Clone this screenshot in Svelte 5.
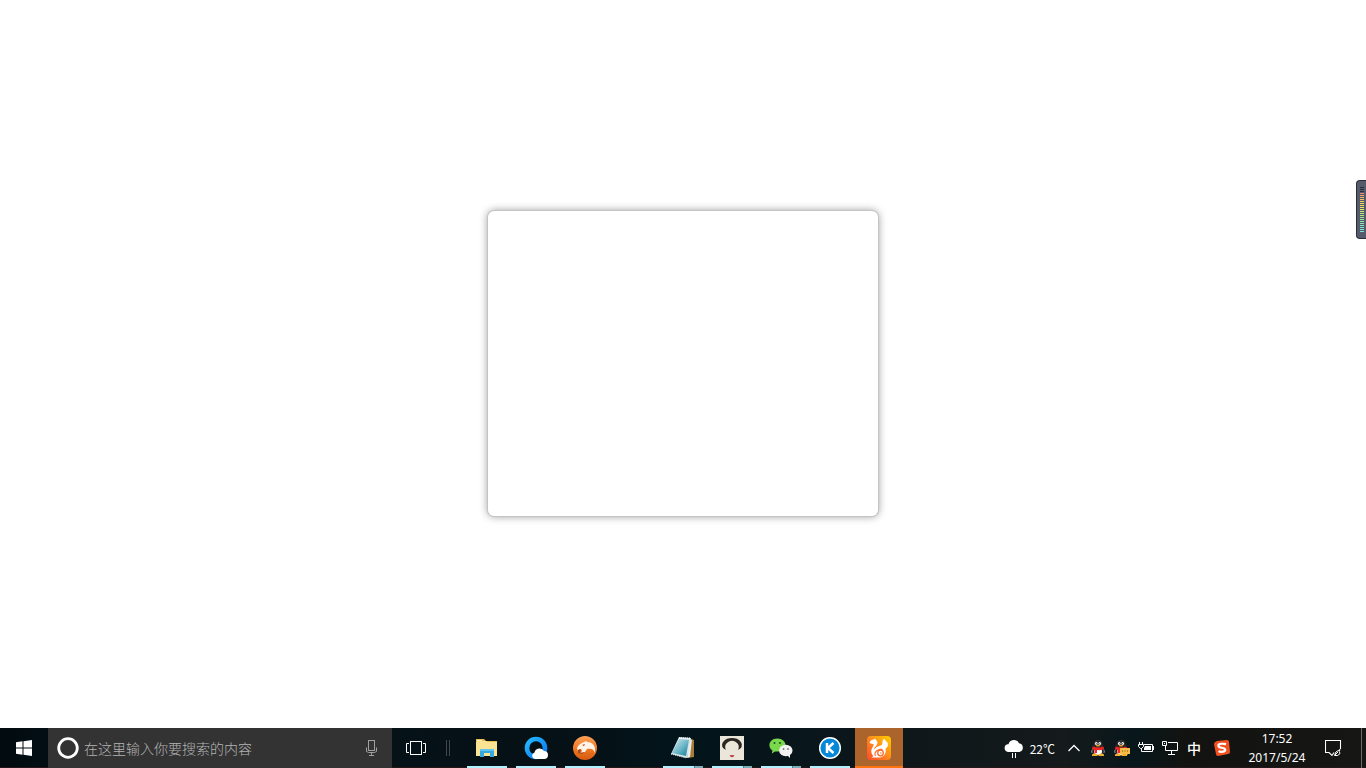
<script lang="ts">
  const apps = [
    { id: 'folder', name: '文件资源管理器', state: 'running' },
    { id: 'browser', name: 'QQ浏览器', state: 'running' },
    { id: 'cheetah', name: '猎豹浏览器', state: 'running' },
    { id: 'gap', name: '', state: 'gap' },
    { id: 'notepad', name: '记事本', state: 'running multi' },
    { id: 'portrait', name: '图片', state: 'running multi' },
    { id: 'wechat', name: '微信', state: 'running multi' },
    { id: 'kugou', name: '酷狗音乐', state: 'running' },
    { id: 'uc', name: 'UC浏览器', state: 'running alert' }
  ];
  const levels = ['#292c3a', '#292c3a', '#292c3a', '#f08a78', '#f3a070', '#f5b065', '#f5bf62', '#f3d060', '#f3d860', '#f0de62', '#eee868', '#e2ea70', '#d0ea78', '#bfe880', '#b0e688', '#a4e690', '#9ae69c', '#92e6a8', '#8ae6b6', '#84e8c2', '#80e8cc', '#7ce8d2', '#7ae8d8'];
</script>

{#snippet penguin()}
  <path d="M1.500 9Q-.5 11 .8 13l2-1zM12.500 9q2 2 .7 4l-2-1z" fill="#9fb4c4" />
  <path d="M3 7V4.500Q3 .5 7 .5t4 4V7q2 2 2 5l-2 2H3l-2-2q0-3 2-5z" fill="#24211f" stroke="#50565a" stroke-width=".5" />
  <ellipse cx="7" cy="11.500" rx="4" ry="3.400" fill="#fff" />
  <ellipse cx="5.300" cy="3.600" rx="1.300" ry="1.500" fill="#fff" />
  <ellipse cx="8.700" cy="3.600" rx="1.300" ry="1.500" fill="#fff" />
  <circle cx="5.700" cy="3.700" r=".5" /><circle cx="8.300" cy="3.700" r=".5" />
  <ellipse cx="7" cy="5.700" rx="2.400" ry=".8" fill="#f5a623" />
  <path d="M1.500 6.500q5.500 2 11 0L13 9q-2 1.500-7 1V13l-2.500.5V10L1 9z" fill="#f02424" />
  <path d="M1 14.500q2.500-2 5.500 0V16H1zM13 14.500q-2.500-2-5.500 0V16H13z" fill="#f0b02c" />
{/snippet}

<div class="screen">
  <main>
    <section class="dialog" aria-label="窗口"></section>
    <aside class="meter" aria-label="音量电平">
      {#each levels as color}<i style="background:{color}"></i>{/each}
    </aside>
  </main>

  <footer>
    <button class="start" aria-label="开始">
      <svg width="16" height="16" viewBox="0 0 16 16" fill="#fff"><path d="M0 2.200 6.500 1.300V7.500H0zM7.500 1.200 16 0v7.500H7.500zM0 8.500h6.500v6.200L0 13.800zM7.500 8.500H16V16l-8.500-1.200z" /></svg>
    </button>
    <div class="search">
      <svg width="22" height="22" viewBox="0 0 22 22"><circle cx="11" cy="11" r="9.300" fill="none" stroke="#fff" stroke-width="2.800" /></svg>
      <input type="text" placeholder="在这里输入你要搜索的内容" aria-label="搜索" />
      <button class="mic" aria-label="语音">
        <svg width="11" height="16" viewBox="0 0 11 16" fill="none" stroke="#a0a0a0"><rect x="2.500" y=".5" width="6" height="10" /><path d="M.5 7.500v4l2 1h6l2-1v-4M5.500 12.500v3M3 15.500h5" /></svg>
      </button>
    </div>
    <button class="view" aria-label="任务视图">
      <svg width="20" height="14" viewBox="0 0 20 14" fill="none" stroke="#fff"><rect x="4.500" y=".5" width="11" height="13" /><path d="M3 2.500H.5v9H3M17 2.500h2.500v9H17" /></svg>
    </button>
    <span class="divider"></span>

    <nav aria-label="任务栏">
      {#each apps as app}
        {#if app.state === 'gap'}
          <span class="app"></span>
        {:else}
          <button class="app {app.state}" aria-label={app.name}>
            <svg width="24" height="24" viewBox="0 0 24 24">
              {#if app.id === 'folder'}
                <path d="M1 3h8l2 2h11v15H1z" fill="#e9bd4d" />
                <path d="M2 5h9l2 1h9v14H1V7z" fill="#fce394" />
                <path d="M2 4h5v1H2z" fill="#fff4c4" />
                <path d="M5 21v-7h14v7h-4v-4H9v4z" fill="#36a8df" />
                <path d="M5 15v-2h14v2z" fill="#5fc5ee" />
              {:else if app.id === 'browser'}
                <defs><linearGradient id="ring" x2="1" y2="1"><stop stop-color="#25b8ff" /><stop offset="1" stop-color="#0a78f0" /></linearGradient></defs>
                <circle cx="12" cy="12" r="9" fill="none" stroke="url(#ring)" stroke-width="4.600" />
                <path d="M11 23a3.400 3.400 0 0 1-.5-6.600A5.200 5.200 0 0 1 20 15a4 4 0 0 1 0 8z" fill="#fff" />
              {:else if app.id === 'cheetah'}
                <defs><linearGradient id="orange" x2="0" y2="1"><stop stop-color="#f9a05a" /><stop offset=".5" stop-color="#f17b26" /><stop offset="1" stop-color="#d75910" /></linearGradient></defs>
                <circle cx="12" cy="12" r="12" fill="url(#orange)" />
                <path d="M4 12c1-3 4-5 7-6l2-1 1 1c6 0 9 4 8 11-1-4-4-5-8-4l-2 3-4 1 1-3-2-1-2 2z" fill="#fff2e6" />
                <path d="M5 14l2-1 1 1-1 3 5-1-3 2-4-1zM9 9l3-1-1 2z" fill="#a94a1c" />
              {:else if app.id === 'notepad'}
                <defs><linearGradient id="note" x2="1" y2="1"><stop stop-color="#d8edf1" /><stop offset=".5" stop-color="#75bacb" /><stop offset="1" stop-color="#137b96" /></linearGradient></defs>
                <path d="M18 2l5 2v17l-6 1z" fill="#aa7b37" /><path d="M18 3l3 1-2 17-3 1z" fill="#e8eded" />
                <path d="M8 1l12 1-4 20L0 18z" fill="#d7e7ea" /><path d="M8 3l10 1-3 16L1 17z" fill="url(#note)" />
                <path d="M8 2h11M0 18l15 4" stroke="#fff" stroke-width="1" stroke-dasharray="1 1" />
              {:else if app.id === 'portrait'}
                <path d="M0 0h24v24H0z" fill="#eae6d9" />
                <path d="M3 12C0 7 5 2 12 2s12 5 9 10l-3 2c2-4 0-7-3-8.500q-3-1.500-6 0C6 7 4 10 6 14z" fill="#292520" />
                <path d="M9.500 19.500q2-1 2.500 0 .5-1 2.500 0-2.500 3.500-5 0z" fill="#bd303a" />
              {:else if app.id === 'wechat'}
                <path d="M8.500 2.500C-.8 2.500-1.500 12 3.500 14.500l-.7 3 3.200-2q10.500 1 10.500-6.500c0-3.500-3.500-6.500-8-6.500z" fill="#7ad84c" />
                <ellipse cx="16.800" cy="14.500" rx="6.700" ry="5.800" fill="#f2f2f2" /><path d="M18 19l3 3v-4z" fill="#f2f2f2" />
                <g fill="#275b22"><circle cx="5.500" cy="7" r="1.100" /><circle cx="11" cy="7" r="1.100" /></g>
                <g fill="#777"><circle cx="14.600" cy="13" r=".9" /><circle cx="19" cy="13" r=".9" /></g>
              {:else if app.id === 'kugou'}
                <circle cx="12" cy="12" r="10.300" fill="#0688d8" stroke="#fff" stroke-width="1.500" />
                <path d="M9 7v10M15.500 7L10 12l5.500 5" fill="none" stroke="#fff" stroke-width="2.500" />
              {:else}
                <defs><linearGradient id="fire" x1="1" x2="0" y2="1"><stop stop-color="#ffd000" /><stop offset=".6" stop-color="#ff7b22" /><stop offset="1" stop-color="#ff4a2e" /></linearGradient></defs>
                <rect width="24" height="24" rx="4" fill="url(#fire)" />
                <path d="M2.500 7C3 4.500 5 3.500 7 3.500L8 2.500l1 1.500c2.500 2 1.500 4.500-.5 6.500-1 1-1.500 2-1 3 2-3.500 4.500-3 7-4.500 2-1.500-.5-4 3-6.500-.5 2 4 3 3.500 6.500-.3 2-1.500 3-2.500 3.500C19.500 17 17.500 20.500 13 21.500H4.500l2-1.500C3.500 17 4 14 5.500 11.500L7 8.500z" fill="#fff" />
                <circle cx="13.500" cy="17" r="2.800" fill="none" stroke="#ff6828" stroke-width="1.300" /><path d="M8.500 20q-1.500-3 1-5t6-1.500M13 17h1.500" fill="none" stroke="#ff6828" stroke-width="1.100" />
              {/if}
            </svg>
          </button>
        {/if}
      {/each}
    </nav>

    <div class="tray">
      <button class="weather" aria-label="天气 22℃">
        <svg width="20" height="20" viewBox="0 0 20 20"><path d="M4 14a4 4 0 0 1-.5-7.800h1a5.600 5.600 0 0 1 10.500-1A4.500 4.500 0 0 1 15.500 14z" fill="#fff" /><path d="M8.500 15v5M11.500 15v5" stroke="#fff" /></svg>
        <span>22℃</span>
      </button>
      <button class="cell" aria-label="显示隐藏的图标"><svg width="14" height="8" viewBox="0 0 14 8"><path d="M1.500 7L7 1.500 12.500 7" fill="none" stroke="#fff" stroke-width="1.300" /></svg></button>
      <button class="cell" aria-label="QQ"><svg width="14" height="16" viewBox="0 0 14 16">{@render penguin()}</svg></button>
      <button class="cell" aria-label="QQ消息"><svg width="16" height="16" viewBox="0 0 16 16">{@render penguin()}<path d="M6 8h10v6h-2l-2 2v-2H6z" fill="#f8bd45" /><path d="M8 11h1M10.500 11h1M13 11h1" stroke="#7a4d10" /></svg></button>
      <button class="cell" aria-label="电源">
        <svg width="16" height="14" viewBox="0 0 16 14" fill="none" stroke="#fff"><path d="M1.500 1v2M4.500 1v2M.5 3.500h5v2l-2 2h-1l-2-2zM3.500 7v3.500H6M6 3.500h8.500v7H6M15.500 5v4" /><path d="M7 5h6v4H6V7z" fill="#fff" stroke="none" /></svg>
      </button>
      <button class="cell" aria-label="网络">
        <svg width="16" height="14" viewBox="0 0 16 14" fill="none" stroke="#fff"><path d="M6 1.500h9.500v8h-12V5M9.500 10v3M6 13.500h7M.5.5h4v4h-4zM2 2.500h1" /></svg>
      </button>
      <button class="cell ime" aria-label="输入法 中">中</button>
      <button class="sogou" aria-label="搜狗输入法">
        <svg width="16" height="16" viewBox="0 0 16 16"><path d="M3 1L13 0q2 0 2 2l1 10q0 2-2 2L4 16q-2 0-2-2L0 4q0-2 3-3z" fill="#f35021" /><path d="M12 4.200C6 3 4 4.300 4.500 6.300 5 8.500 11 7 11.200 9.700 11.300 12 7 12.200 4.500 11.300" fill="none" stroke="#fff" stroke-width="2.200" /></svg>
      </button>
      <button class="clock"><span>17:52</span><span>2017/5/24</span></button>
      <button class="action" aria-label="操作中心">
        <svg width="17" height="17" viewBox="0 0 17 17" fill="none" stroke="#fff"><path d="M9 12.500L7 15.500l-3-3H.5V.5h15V9" stroke-width="1.100" /><path d="M9.500 15.500q0-4 5.500-6-1.500 2 0 4-2 3-5.500 2zM10 15l3-3" /></svg>
      </button>
      <button class="desktop" aria-label="显示桌面"></button>
    </div>
  </footer>
</div>

<style>
  :global(body) { margin: 0; background: #fff; }
  * { box-sizing: border-box; }
  .screen { min-height: 100vh; display: flex; flex-direction: column; font-family: "Noto Sans CJK SC", sans-serif; }
  main { flex: 1; display: grid; place-items: center; position: relative; padding-bottom: 2px; }
  .dialog { width: 390px; aspect-ratio: 390 / 305; border-radius: 6px; box-shadow: 0 0 0 1px #c4c4c4, 0 0 8px rgba(0, 0, 0, .45); background: #fff; }
  .meter { position: absolute; right: 0; top: 180px; width: 10px; padding: 6px 2px 6px 3px; border: 1px solid #2b2d38; border-right: 0; border-radius: 4px 0 0 4px; background: #565b6c; display: grid; gap: 1px; }
  .meter i { height: 1px; }
  footer { height: 40px; display: flex; background: linear-gradient(90deg, #020b0f 0%, #031318 8%, #061116 40%, #02141a 50%, #0e171b 66%, #151a1b 78%, #08171b 83%, #121310 87%, #161714 100%); border-bottom: 1px solid #211817; color: #fff; }
  button { appearance: none; border: 0; margin: 0; padding: 0; background: transparent; color: inherit; font: inherit; display: flex; align-items: center; justify-content: center; flex-shrink: 0; }
  svg { display: block; flex-shrink: 0; }
  .start, .view { width: 48px; }
  .search { flex: 0 1 344px; min-width: 0; height: 40px; display: flex; align-items: center; padding: 0 15px 0 9px; gap: 5px; background: #333; }
  input { flex: 1; min-width: 0; height: 32px; padding: 0; border: 0; outline: 0; background: transparent; color: #fff; font: 300 14px/20px "Noto Sans CJK SC", sans-serif; }
  input::placeholder { color: #b4b4b4; opacity: 1; }
  .divider { width: 4px; height: 16px; margin: 12px 13px 0 6px; border: 1px solid #42484a; border-width: 0 1px; }
  nav { display: flex; gap: 1px; height: 40px; }
  .app { width: 48px; height: 40px; position: relative; flex-shrink: 0; }
  .running::after { content: ""; position: absolute; left: 4px; right: 4px; bottom: 0; height: 2px; background: #b0f0ff; }
  .multi::after { background: linear-gradient(90deg, #b0f0ff 31px, #537f88 31px, #537f88 32px, #79aeb9 32px); }
  .alert { background: #ab642b; }
  .alert::after { left: 0; right: 0; background: #ff7410; }
  .tray { margin-left: auto; display: flex; height: 40px; }
  .weather { gap: 6px; padding-right: 7px; font-size: 12px; }
  .cell { width: 24px; }
  .ime { font-size: 14px; font-weight: 500; line-height: 20px; }
  .sogou { width: 35px; padding-right: 3px; }
  .clock { width: 72px; flex-direction: column; font: 12px/19px "Noto Sans", "Open Sans", sans-serif; }
  .action { width: 40px; }
  .desktop { width: 5px; margin-left: 8px; border-left: 1px solid #6a6c6b; }
</style>
